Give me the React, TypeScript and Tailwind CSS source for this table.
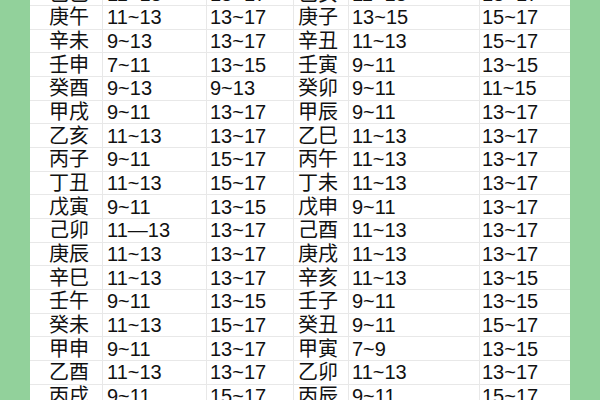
const rows: string[][] = [
    ['己巳', '11~13', '13~17', '己亥', '11~13', '13~17'],
    ['庚午', '11~13', '13~17', '庚子', '13~15', '15~17'],
    ['辛未', '9~13', '13~17', '辛丑', '11~13', '15~17'],
    ['壬申', '7~11', '13~15', '壬寅', '9~11', '13~15'],
    ['癸酉', '9~13', '9~13', '癸卯', '9~11', '11~15'],
    ['甲戌', '9~11', '13~17', '甲辰', '9~11', '13~17'],
    ['乙亥', '11~13', '13~17', '乙巳', '11~13', '13~17'],
    ['丙子', '9~11', '15~17', '丙午', '11~13', '13~17'],
    ['丁丑', '11~13', '15~17', '丁未', '11~13', '13~17'],
    ['戊寅', '9~11', '13~15', '戊申', '9~11', '13~17'],
    ['己卯', '11—13', '13~17', '己酉', '11~13', '13~17'],
    ['庚辰', '11~13', '13~17', '庚戌', '11~13', '13~17'],
    ['辛巳', '11~13', '13~17', '辛亥', '11~13', '13~15'],
    ['壬午', '9~11', '13~15', '壬子', '9~11', '13~15'],
    ['癸未', '11~13', '15~17', '癸丑', '9~11', '15~17'],
    ['甲申', '9~11', '13~17', '甲寅', '7~9', '13~15'],
    ['乙酉', '11~13', '13~17', '乙卯', '11~13', '13~17'],
    ['丙戌', '9~11', '15~17', '丙辰', '9~11', '15~17'],
]

// left padding per column
const pads = ['pl-[19px]', 'pl-[4px]', 'pl-[3px]', 'pl-[4px]', 'pl-[3px]', 'pl-[2px]']

export default function App() {
    return (
        <div className="w-[600px] h-[400px] overflow-hidden flex bg-[#92d19b]">
            <div className="w-[30px] shrink-0" />
            <div className="w-[540px] shrink-0 bg-white overflow-hidden">
                <div
                    className="-mt-[17.5px] text-[20px] text-[#111] leading-none"
                    style={{ fontFamily: '"Liberation Sans", "Noto Sans CJK SC", sans-serif' }}
                >
                    {rows.map((r, i) => (
                        <div
                            key={i}
                            className="grid grid-cols-[73px_104px_87px_55px_131px_90px] h-[23.67px] border-b border-[#e8e8e8]"
                        >
                            {r.map((c, j) => (
                                <div
                                    key={j}
                                    className={`flex items-center whitespace-nowrap ${pads[j]} ${j < 5 ? 'border-r border-[#e8e8e8]' : ''}`}
                                >
                                    {c}
                                </div>
                            ))}
                        </div>
                    ))}
                </div>
            </div>
            <div className="w-[30px] shrink-0" />
        </div>
    )
}
